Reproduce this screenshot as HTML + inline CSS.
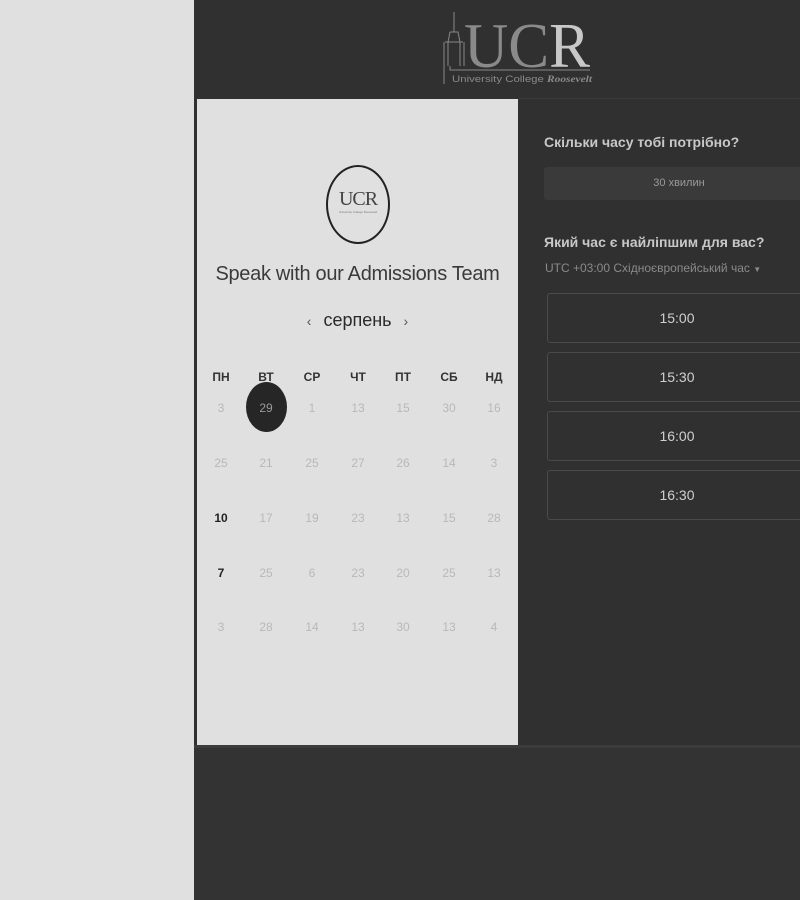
<!DOCTYPE html>
<html><head><meta charset="utf-8"><style>
*{margin:0;padding:0;box-sizing:border-box}
body{width:800px;height:900px;background:#e0e0e0;position:relative;overflow:hidden;font-family:"Liberation Sans","DejaVu Sans",sans-serif}
.a{position:absolute}
.dark{left:194px;top:0;width:606px;height:900px;background:#303030}
.panel{left:197px;top:99px;width:321px;height:646px;background:#e0e0e0}
.bottom{left:194px;top:745px;width:606px;height:155px;background:#333;border-top:3px solid #3c3c3c}
.topline{left:518px;top:98px;width:282px;height:1px;background:#3a3a3a}
.c{text-align:center;width:40px;margin-left:-20px}
.hd{font-size:12px;font-weight:bold;color:#333;top:370px}
.d{font-size:12px;color:#b8b8b8}
.slot{left:547px;width:260px;height:50px;border:1px solid #4a4a4a;border-radius:3px;color:#cfcfcf;font-size:14px;text-align:center;line-height:48px}
</style></head><body>
<div class="a dark"></div>
<div class="a topline"></div>
<div class="a panel"></div>
<div class="a bottom"></div>

<svg class="a" style="left:440px;top:4px" width="160" height="84" viewBox="0 0 160 84">
<g stroke="#888" fill="none" stroke-width="1">
<path d="M14 8 L14 28 M10 28 L18 28 L20 38 L20 62 M8 62 L8 38 L10 28 M5 38 L23 38 M4 38 L4 80 M24 38 L24 62"/>
<path d="M10 62 L10 66 L150 66"/>
</g>
<text x="24" y="63" font-family="Liberation Serif,serif" font-size="64" textLength="126" lengthAdjust="spacingAndGlyphs"><tspan fill="#8a8a8a">UC</tspan><tspan fill="#c8c8c8">R</tspan></text>
<text x="12" y="78" font-family="Liberation Sans,sans-serif" font-size="9" fill="#8a8a8a" textLength="140" lengthAdjust="spacingAndGlyphs">University College <tspan font-family="Liberation Serif,serif" font-style="italic" font-weight="bold">Roosevelt</tspan></text>
</svg>

<div class="a" style="left:326px;top:165px;width:64px;height:79px;border:2px solid #222;border-radius:50%"></div>
<div class="a" style="left:332px;top:188px;width:52px;text-align:center;font-family:'Liberation Serif',serif;font-size:20px;color:#444;letter-spacing:-1px">UCR</div>
<div class="a" style="left:334px;top:210px;width:48px;text-align:center;font-size:3px;color:#777">University College Roosevelt</div>

<div class="a" style="left:197px;top:263px;width:321px;text-align:center;font-size:20px;color:#3a3a3a;letter-spacing:-0.3px">Speak with our Admissions Team</div>

<div class="a" style="left:197px;top:310px;width:321px;text-align:center;font-size:18px;color:#2a2a2a"><span style="font-size:14px;color:#555;margin-right:12px">‹</span>серпень<span style="font-size:14px;color:#555;margin-left:12px">›</span></div>

<div class="a" style="left:246px;top:382px;width:41px;height:50px;border-radius:50%;background:#262626"></div>

<div class="a c hd" style="left:221px">ПН</div>
<div class="a c hd" style="left:266px">ВТ</div>
<div class="a c hd" style="left:312px">СР</div>
<div class="a c hd" style="left:358px">ЧТ</div>
<div class="a c hd" style="left:403px">ПТ</div>
<div class="a c hd" style="left:449px">СБ</div>
<div class="a c hd" style="left:494px">НД</div>

<div id="cal"></div>
<script>
var rows=[["3","29","1","13","15","30","16"],["25","21","25","27","26","14","3"],["10","17","19","23","13","15","28"],["7","25","6","23","20","25","13"],["3","28","14","13","30","13","4"]];
var xs=[221,266,312,358,403,449,494],ys=[401,456,511,566,620],h="";
rows.forEach(function(r,i){r.forEach(function(v,j){var st="left:"+xs[j]+"px;top:"+ys[i]+"px;";
if(i==0&&j==1)st+="color:#999;";
if((i==2||i==3)&&j==0)st+="color:#222;font-weight:bold;";
h+='<div class="a c d" style="'+st+'">'+v+'</div>';});});
document.getElementById("cal").innerHTML=h;
</script>

<div class="a" style="left:544px;top:134px;font-size:14px;font-weight:bold;color:#c8c8c8">Скільки часу тобі потрібно?</div>
<div class="a" style="left:544px;top:167px;width:270px;height:33px;background:#3a3a3a;border-radius:3px;text-align:center;line-height:33px;font-size:11px;color:#9a9a9a">30 хвилин</div>
<div class="a" style="left:544px;top:234px;font-size:14px;font-weight:bold;color:#c8c8c8">Який час є найліпшим для вас?</div>
<div class="a" style="left:545px;top:261px;font-size:12px;color:#8a8a8a">UTC +03:00 Східноєвропейський час <span style="font-size:8px">▼</span></div>

<div class="a slot" style="top:293px">15:00</div>
<div class="a slot" style="top:352px">15:30</div>
<div class="a slot" style="top:411px">16:00</div>
<div class="a slot" style="top:470px">16:30</div>
</body></html>
